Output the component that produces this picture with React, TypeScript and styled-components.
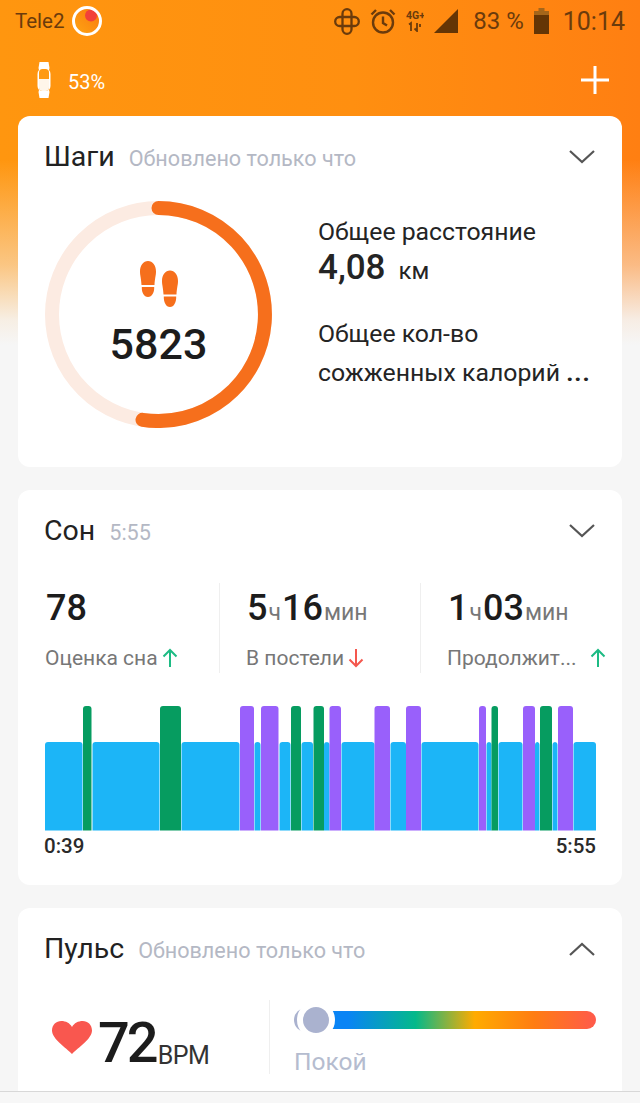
import styled, { createGlobalStyle } from 'styled-components';

const GlobalStyle = createGlobalStyle`
  html, body {
    margin: 0;
    padding: 0;
    background: #f6f6f6;
  }
  * {
    box-sizing: border-box;
  }
`;

const Page = styled.div`
  width: 640px;
  height: 1103px;
  display: flex;
  flex-direction: column;
  overflow: hidden;
  font-family: Roboto, "Noto Sans", sans-serif;
  color: #1c1c1c;
  background:
    linear-gradient(180deg, rgba(246, 246, 246, 0) 160px, rgba(246, 246, 246, 0.5) 265px, rgba(246, 246, 246, 0.92) 320px, #f6f6f6 345px),
    linear-gradient(90deg, #ff960f 0%, #ff8f10 55%, #ff7f12 100%);
`;

const StatusBar = styled.div`
  height: 42px;
  padding: 0 15px;
  display: flex;
  align-items: center;
  color: #6b3b0c;
  font-size: 20px;
`;

const Carrier = styled.span`
  font-size: 20.5px;
  margin-right: 6px;
`;

const Spacer = styled.div`
  flex: 1;
`;

const StatusIcons = styled.div`
  display: flex;
  align-items: center;
  gap: 10px;
`;

const StatusText = styled.span<{ $size: number; $left: number }>`
  margin-left: ${(p) => p.$left}px;
  font-size: ${(p) => p.$size}px;
  white-space: nowrap;
`;

const Toolbar = styled.div`
  height: 74px;
  padding: 2px 31px 0 37px;
  display: flex;
  align-items: center;
  color: #fff;
  font-size: 20px;
`;

const BandLevel = styled.span`
  margin-left: 17px;
  margin-top: 4px;
`;

const Cards = styled.main`
  flex: 1;
  min-height: 0;
  overflow: hidden;
  padding: 0 18px;
  display: flex;
  flex-direction: column;
  gap: 23px;
`;

const Card = styled.section<{ $height: number }>`
  flex: 0 0 ${(p) => p.$height}px;
  background: #fff;
  border-radius: 12px;
  padding: 0 26px 0 27px;
`;

const CardHeader = styled.header`
  height: 81px;
  display: flex;
  align-items: center;
`;

const CardTitle = styled.h2`
  margin: 0 0 0 -1px;
  font-size: 28.5px;
  font-weight: 400;
  color: #222;
`;

const CardNote = styled.span`
  margin-left: 14px;
  margin-top: 4px;
  font-size: 21.6px;
  color: #b4b8c4;
`;

const StepsBody = styled.div`
  display: flex;
  align-items: flex-start;
  margin-top: 4px;
`;

const Ring = styled.div`
  position: relative;
  width: 227px;
  height: 227px;
`;

const RingCenter = styled.div`
  position: absolute;
  left: 0;
  right: 0;
  top: 60px;
  display: flex;
  flex-direction: column;
  align-items: center;
`;

const StepsCount = styled.div`
  margin-top: 12px;
  font-size: 43px;
  font-weight: 500;
  line-height: 50px;
  color: #1c1c1c;
`;

const StepsFacts = styled.div`
  margin-left: 46px;
  padding-top: 13px;
  font-size: 24.8px;
  line-height: 36px;
  color: #242424;
`;

const Distance = styled.div`
  margin-bottom: 27px;
`;

const DistanceValue = styled.span`
  font-size: 35px;
  font-weight: 500;
`;

const DistanceUnit = styled.span`
  margin-left: 13px;
  font-size: 24px;
`;

const CalorieLine = styled.div`
  margin-top: 3px;
`;

const Ellipsis = styled.b`
  font-weight: 700;
  letter-spacing: 1px;
`;

const Stats = styled.div`
  display: grid;
  grid-template-columns: 174px 201px 1fr;
  height: 90px;
  margin-top: 12px;
`;

const Stat = styled.div<{ $first?: boolean }>`
  padding-left: ${(p) => (p.$first ? 1 : 27)}px;
  border-left: ${(p) => (p.$first ? 'none' : '1px solid #efefef')};
  white-space: nowrap;
`;

const StatValue = styled.div`
  height: 53px;
  padding-top: 4px;
  display: flex;
  align-items: baseline;
  font-size: 36px;
  font-weight: 500;
  color: #1c1c1c;
`;

const StatUnit = styled.span`
  font-size: 23px;
  font-weight: 400;
  color: #777;
  margin: 0 1px;
`;

const StatLabel = styled.div`
  margin-top: 10px;
  margin-left: -1px;
  display: flex;
  align-items: center;
  font-size: 21px;
  color: #777;
`;

const StatName = styled.span<{ $wide?: boolean }>`
  margin-right: ${(p) => (p.$wide ? 13 : 4)}px;
`;

const SleepChart = styled.svg`
  display: block;
  margin-top: 33px;
  margin-left: -0.5px;
`;

const ChartAxis = styled.div`
  display: flex;
  justify-content: space-between;
  margin-top: 3px;
  margin-left: -1px;
  width: 552px;
  font-size: 20.5px;
  font-weight: 500;
  color: #2a2a2a;
`;

const PulseBody = styled.div`
  display: flex;
  align-items: stretch;
  height: 74px;
  margin-top: 11px;
`;

const PulseValue = styled.div`
  width: 224px;
  padding-left: 7px;
  display: flex;
  align-items: center;
`;

const Bpm = styled.span`
  font-size: 56px;
  font-weight: 500;
  letter-spacing: -3px;
  margin-left: 6px;
  margin-top: 12px;
  line-height: 74px;
  color: #1c1c1c;
`;

const BpmUnit = styled.span`
  align-self: flex-end;
  margin-left: 2px;
  margin-bottom: 4px;
  font-size: 25px;
  letter-spacing: -0.5px;
  color: #333;
`;

const PulseScale = styled.div`
  flex: 1;
  border-left: 1px solid #efefef;
  padding-left: 24px;
`;

const ScaleTrack = styled.div`
  position: relative;
  height: 18px;
  margin-top: 11px;
  margin-left: 20px;
  width: 282px;
  border-radius: 0 9px 9px 0;
  background: linear-gradient(90deg, #0a84f5 12%, #03b98a 36%, #ffab00 57%, #ff7d12 78%, #ff5a4b 100%);
`;

const ScaleThumb = styled.div`
  position: absolute;
  left: -17px;
  top: -10px;
  width: 38px;
  height: 38px;
  border-radius: 50%;
  background: #aab2cf;
  border: 6px solid #fff;
`;

const ScaleCrescent = styled.div`
  position: absolute;
  left: -20px;
  top: -3px;
  width: 24px;
  height: 24px;
  border-radius: 50%;
  border-left: 4px solid #aab2cf;
`;

const ScaleLabel = styled.div`
  margin-top: 18px;
  font-size: 24.5px;
  color: #b5bccf;
`;

const BottomBar = styled.div`
  flex: 0 0 12px;
  background: #f7f7f7;
  border-top: 1px solid #d8d8d8;
`;

const Chevron = ({ up }: { up?: boolean }) => (
  <svg width="28" height="14" viewBox="0 0 28 14" fill="none" stroke="#555" strokeWidth="2.2">
    <path d={up ? 'M2 13L14 2l12 11' : 'M2 1l12 11L26 1'} />
  </svg>
);

const TrendArrow = ({ down }: { down?: boolean }) => (
  <svg width="16" height="20" viewBox="0 0 16 20" fill="none" stroke={down ? '#f4574e' : '#1dbb84'} strokeWidth="2">
    {down ? <path d="M8 1v17M1.5 11.5L8 18l6.5-6.5" /> : <path d="M8 19V2M1.5 8.5L8 2l6.5 6.5" />}
  </svg>
);

const Tele2Logo = () => (
  <svg width="32" height="32" viewBox="0 0 32 32">
    <defs>
      <linearGradient id="tele" x1="0" y1="1" x2="1" y2="0">
        <stop offset="0" stopColor="#ffa512" />
        <stop offset="1" stopColor="#f9780f" />
      </linearGradient>
    </defs>
    <circle cx="16" cy="16" r="13.5" fill="url(#tele)" />
    <circle cx="20" cy="10.5" r="6" fill="#f2413a" />
    <circle cx="16" cy="16" r="13.5" fill="none" stroke="#fff" strokeWidth="3" />
  </svg>
);

const FlowerIcon = () => (
  <svg width="26" height="27" viewBox="0 0 26 27" fill="none" stroke="#6b3b0c" strokeWidth="2.3">
    <rect x="8.5" y="1.2" width="9" height="24.6" rx="4.5" />
    <rect x="1.2" y="9" width="23.6" height="9" rx="4.5" />
  </svg>
);

const AlarmIcon = () => (
  <svg width="26" height="26" viewBox="0 0 26 26" fill="none" stroke="#6b3b0c" strokeWidth="2.4">
    <circle cx="13" cy="14.5" r="10" />
    <path d="M13 8.5v6.5l4 2.5M1.5 6.5L6 2M24.500 6.5L20 2" />
  </svg>
);

const NetworkIcon = () => (
  <svg width="18" height="22" viewBox="0 0 18 22" fill="none" stroke="#6b3b0c" strokeWidth="1.8">
    <text x="0" y="9" fontFamily="Roboto, sans-serif" fontSize="10.5" fontWeight="700" fill="#6b3b0c" stroke="none">4G+</text>
    <path d="M3 14.5l2-1.5v8M11 13v8l-2.5-2.5M14 14v3" />
  </svg>
);

const SignalIcon = () => (
  <svg width="24" height="24" viewBox="0 0 24 24">
    <path d="M24 0v24H0z" fill="#643505" />
  </svg>
);

const BatteryIcon = () => (
  <svg width="15" height="26" viewBox="0 0 15 26">
    <path d="M4.5 0h6v3h-6z" fill="#a5661a" />
    <path d="M0 3h15v5H0z" fill="#a5661a" />
    <path d="M0 7h15v19H0z" fill="#643505" />
  </svg>
);

const BandIcon = () => (
  <svg width="14" height="36" viewBox="0 0 14 36" fill="none">
    <path d="M2.5 0h9l1 6-.5 2a6 6 0 0 1 1.5 4v12a6 6 0 0 1-1.5 4l.5 2-1 6h-9l-1-6 .5-2a6 6 0 0 1-1.5-4V12a6 6 0 0 1 1.5-4l-.5-2z" fill="#fff" />
    <rect x="2" y="7" width="10" height="22" rx="3.5" fill="#ff9a12" />
    <path d="M2 17h10v8.500a3.5 3.5 0 0 1-3.5 3.5h-3A3.5 3.5 0 0 1 2 25.500z" fill="#fff6ea" />
  </svg>
);

const PlusIcon = () => (
  <svg width="28" height="28" viewBox="0 0 28 28" stroke="#fff" strokeWidth="3">
    <path d="M14 0v28M0 14h28" />
  </svg>
);

const StepsIcon = () => (
  <svg width="38" height="46" viewBox="0 0 38 46" fill="#f66f1c">
    <path d="M8 0c4.6 0 8 4.5 8 10.5 0 4-1.2 7-1.5 13.5H1.500C1.200 17.500 0 14.500 0 10.500 0 4.500 3.400 0 8 0zM1.800 26h12.400c.2 5.500-2.200 10-6.200 10s-6.400-4.500-6.200-10z" />
    <path d="M30 9.500c4.600 0 8 4.500 8 10.500 0 4-1.200 7-1.500 13.500h-13c-.3-6.500-1.500-9.500-1.500-13.500 0-6 3.400-10.500 8-10.500zM23.800 35.500h12.400c.2 5.500-2.200 10.500-6.200 10.500s-6.400-5-6.200-10.500z" />
  </svg>
);

const HeartIcon = () => (
  <svg width="40" height="33" viewBox="0 0 40 33" fill="#f9574f">
    <path d="M20 33C14 26.500 0 18 0 9.500 0 3.800 4.300 0 9.300 0 13.800 0 17.800 2 20 6c2.200-4 6.200-6 10.700-6C35.700 0 40 3.800 40 9.500 40 18 26 26.500 20 33z" />
  </svg>
);

// x ranges of each sleep phase, in chart pixels from the left edge
const lightSleep = [
  [0, 37.5], [47.5, 114.5], [136.5, 194.5], [209.5, 215.5], [234.5, 245.5], [256.5, 268], [279, 284.5],
  [296.5, 329.5], [345.5, 361], [376.5, 433.5], [441.5, 446.5], [453.5, 477.5], [490, 494.5], [507.5, 512.5], [528.5, 551],
];
const deepSleep = [[38, 46.5], [115, 136], [246, 256], [268.5, 279], [446.5, 453], [495, 507]];
const remSleep = [[195, 209], [216, 233.5], [284.5, 296], [329.5, 345], [361, 376], [434, 441], [478, 490], [513, 528]];

const Segment = ({ from, to, tall, color }: { from: number; to: number; tall: boolean; color: string }) => {
  const top = tall ? 0 : 36;
  const x = from;
  const w = to - from;
  const bottom = 124.5;
  return <path d={`M${x} ${bottom}V${top + 3}q0-3 3-3h${w - 6}q3 0 3 3V${bottom}z`} fill={color} />;
};

function App() {
  return (
    <Page>
      <GlobalStyle />
      <StatusBar>
        <Carrier>Tele2</Carrier>
        <Tele2Logo />
        <Spacer />
        <StatusIcons>
          <FlowerIcon />
          <AlarmIcon />
          <NetworkIcon />
          <SignalIcon />
          <StatusText $size={24} $left={5}>83 %</StatusText>
          <BatteryIcon />
          <StatusText $size={25} $left={4}>10:14</StatusText>
        </StatusIcons>
      </StatusBar>

      <Toolbar>
        <BandIcon />
        <BandLevel>53%</BandLevel>
        <Spacer />
        <PlusIcon />
      </Toolbar>

      <Cards>
        <Card $height={351}>
          <CardHeader>
            <CardTitle>Шаги</CardTitle>
            <CardNote>Обновлено только что</CardNote>
            <Spacer />
            <Chevron />
          </CardHeader>
          <StepsBody>
            <Ring>
              <svg width="227" height="227" viewBox="0 0 227 227" fill="none" strokeWidth="14">
                <circle cx="113.5" cy="113.5" r="106.5" stroke="#fcebe2" />
                <path d="M113.5 7A106.5 106.5 0 1 1 97.5 218.8" stroke="#f66f1c" strokeLinecap="round" />
              </svg>
              <RingCenter>
                <StepsIcon />
                <StepsCount>5823</StepsCount>
              </RingCenter>
            </Ring>
            <StepsFacts>
              <Distance>
                <div>Общее расстояние</div>
                <DistanceValue>4,08</DistanceValue>
                <DistanceUnit>км</DistanceUnit>
              </Distance>
              <div>Общее кол-во</div>
              <CalorieLine>
                сожженных калорий <Ellipsis>...</Ellipsis>
              </CalorieLine>
            </StepsFacts>
          </StepsBody>
        </Card>

        <Card $height={395}>
          <CardHeader>
            <CardTitle>Сон</CardTitle>
            <CardNote>5:55</CardNote>
            <Spacer />
            <Chevron />
          </CardHeader>
          <Stats>
            <Stat $first>
              <StatValue>78</StatValue>
              <StatLabel>
                <StatName>Оценка сна</StatName>
                <TrendArrow />
              </StatLabel>
            </Stat>
            <Stat>
              <StatValue>
                5<StatUnit>ч</StatUnit>16<StatUnit>мин</StatUnit>
              </StatValue>
              <StatLabel>
                <StatName>В постели</StatName>
                <TrendArrow down />
              </StatLabel>
            </Stat>
            <Stat>
              <StatValue>
                1<StatUnit>ч</StatUnit>03<StatUnit>мин</StatUnit>
              </StatValue>
              <StatLabel>
                <StatName $wide>Продолжит...</StatName>
                <TrendArrow />
              </StatLabel>
            </Stat>
          </Stats>
          <SleepChart width="551" height="125" viewBox="0 0 551 125">
            {lightSleep.map(([from, to]) => (
              <Segment key={from} from={from} to={to} tall={false} color="#1cb5f7" />
            ))}
            {deepSleep.map(([from, to]) => (
              <Segment key={from} from={from} to={to} tall color="#069c60" />
            ))}
            {remSleep.map(([from, to]) => (
              <Segment key={from} from={from} to={to} tall color="#9960fb" />
            ))}
          </SleepChart>
          <ChartAxis>
            <span>0:39</span>
            <span>5:55</span>
          </ChartAxis>
        </Card>

        <Card $height={230}>
          <CardHeader>
            <CardTitle>Пульс</CardTitle>
            <CardNote>Обновлено только что</CardNote>
            <Spacer />
            <Chevron up />
          </CardHeader>
          <PulseBody>
            <PulseValue>
              <HeartIcon />
              <Bpm>72</Bpm>
              <BpmUnit>BPM</BpmUnit>
            </PulseValue>
            <PulseScale>
              <ScaleTrack>
                <ScaleCrescent />
                <ScaleThumb />
              </ScaleTrack>
              <ScaleLabel>Покой</ScaleLabel>
            </PulseScale>
          </PulseBody>
        </Card>
      </Cards>

      <BottomBar />
    </Page>
  );
}

export default App;
